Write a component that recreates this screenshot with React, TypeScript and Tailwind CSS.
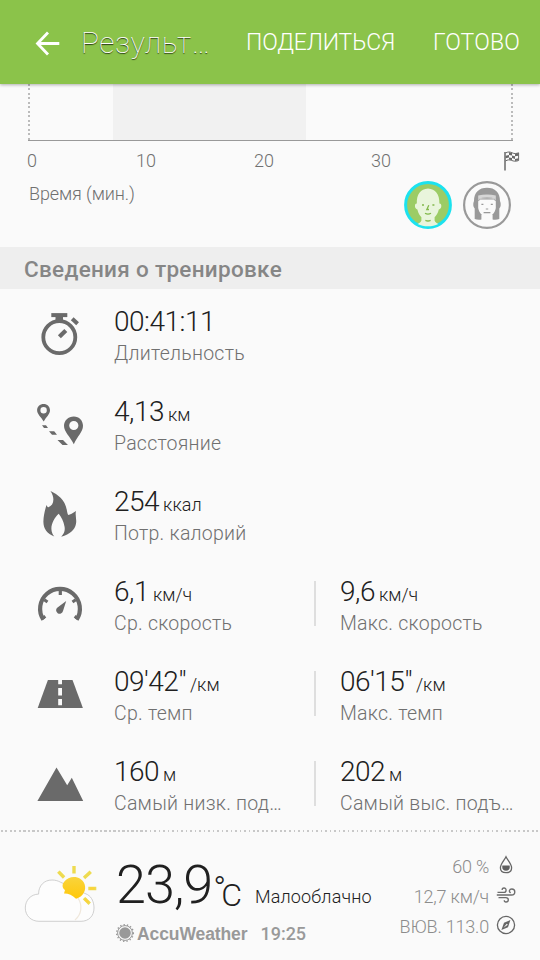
import type { ReactNode } from "react";

interface MetricProps {
    value: string;
    unit?: string;
    label: string;
}

interface RowProps {
    icon: ReactNode;
    first: MetricProps;
    second?: MetricProps;
}

function StopwatchIcon() {
    return (
        <svg width="48" height="48" viewBox="0 0 48 48" fill="none" stroke="#6a6a6a">
            <circle cx="23.3" cy="26.2" r="16" strokeWidth="3.8" />
            <path d="M15.3 4.1H31.3" strokeWidth="4" />
            <path d="M19.5 5H27V10H19.5Z" fill="#6a6a6a" stroke="none" />
            <path d="M36.2 7.8L41.6 12.8" strokeWidth="4" />
            <path d="M23.4 25.8L29.8 19.4" strokeWidth="4.2" />
        </svg>
    );
}

function RouteIcon() {
    return (
        <svg width="48" height="48" viewBox="0 .8 48 48" fill="#6a6a6a">
            <path fillRule="evenodd" d="M7.6 3.7C3.9 3.7 1.1 6.4 1.1 10C1.1 14 5 16.6 7.7 21.3C10.3 16.6 14 14 14 10C14 6.4 11.3 3.7 7.6 3.7ZM7.6 6.8A3.2 3.2 0 1 1 7.6 13.2A3.2 3.2 0 0 1 7.6 6.8Z" />
            <path fillRule="evenodd" d="M37.8 16.2C32.3 16.2 28 20.3 28 25.6C28 31.8 33.7 35.7 37.8 44C41.6 35.7 47 31.8 47 25.6C47 20.3 43.2 16.2 37.8 16.2ZM37.8 20.7A4.6 4.6 0 1 1 37.8 29.9A4.6 4.6 0 0 1 37.8 20.7Z" />
            <path d="M6 25H10L12 27.7H8ZM13 31H18.2L21 34.6H16ZM21.5 39.8H27L32 44.8H26.5Z" />
        </svg>
    );
}

function FlameIcon() {
    return (
        <svg width="48" height="48" viewBox="0 1.3 48 48" fill="#6a6a6a">
            <path d="M14.5 1.4C22 4.8 29.2 10.7 30.8 20.2C31.3 22.8 31.6 24.4 32.3 25.4C34.3 25.1 36.6 23.4 40 21.4C38.9 25.7 40.9 29.3 40 34C38.9 40 34.3 44.5 25.2 47C28.2 43.8 29.3 41.1 28.5 36.7C27.6 31.6 25.5 27.4 22.7 24.1C18.3 28.2 15.2 34.2 15.4 39.3C15.5 42.5 16.7 44.8 18.3 46.8C11 43.9 7.2 39 7.4 31.5C7.6 25.8 8.9 20.5 10.5 15.2C11.4 17.1 12 17.6 12.4 17.6C17.6 15.9 19.4 8.7 14.5 1.4Z" />
        </svg>
    );
}

function GaugeIcon() {
    return (
        <svg width="48" height="48" viewBox="0 0 48 48" fill="none" stroke="#6a6a6a">
            <path d="M7.3 38.6A19.9 19.9 0 1 1 40.7 38.6" strokeWidth="4.2" />
            <path d="M24.3 8.5V14M5.6 38L9.3 35.2M42.4 38L38.7 35.2" strokeWidth="3.2" />
            <path d="M8.3 18.7L11.5 21M39.7 18.7L36.5 21" strokeWidth="3" />
            <path d="M30.2 20L21.5 26.4A3.5 3.5 0 1 0 27 30Z" fill="#6a6a6a" stroke="none" />
        </svg>
    );
}

function RoadIcon() {
    return (
        <svg width="48" height="48" viewBox="0 .9 48 48">
            <path d="M11.9 9.8H36.5L46.9 37.8H1.7Z" fill="#6a6a6a" />
            <path d="M22.2 9.8H26V14.1H22.2ZM22.2 18H26V25.3H22.2ZM22.2 29H26V35.2H22.2Z" fill="#fafafa" />
        </svg>
    );
}

function MountainIcon() {
    return (
        <svg width="48" height="48" viewBox="0 .8 48 48">
            <path d="M1.4 40.8L20.5 7.2L31.2 25L35.8 17.5L47.2 40.8Z" fill="#6a6a6a" />
        </svg>
    );
}

function FlagIcon() {
    return (
        <svg className="mt-0.5" width="16" height="20" viewBox="0 0 16 20" fill="none" stroke="#686868">
            <path d="M1 1V19.5" strokeWidth="1.5" />
            <path d="M1.5 2C4 .6 6 .8 8 1.8C10.5 3 12.5 2.6 14.6 1.8V9.5C12 10.7 9.5 10.2 7.6 9.4C5.5 8.6 3.6 8.6 1.5 10" strokeWidth="1" />
            <path d="M5 1.3L8 2V4.5L5 4ZM11 2.8L14.5 2V4.8L11 5.3ZM1.6 4.8L5 4V6.5L1.6 7.3ZM8 4.5L11 5.3V7.9L8 7ZM5 6.5L8 7V9.3L5 8.6ZM11 7.9L14.5 7.3V9.3L11 10Z" fill="#686868" stroke="none" />
        </svg>
    );
}

function MaleAvatar() {
    return (
        <svg width="48" height="48" viewBox="0 0 48 48">
            <circle cx="24" cy="24" r="22.4" fill="#9ccc65" stroke="#1ce2ee" strokeWidth="3" />
            <path d="M24 7.6C16.5 8 12.6 13.5 12.8 22.5C10 22.4 10.5 28 13.4 28.5C14.2 32 15.6 34.5 17.4 36.2V39.5C17 41.5 14.6 42.2 13.6 43C16.8 44.7 20.3 45.3 24 45.3C27.7 45.3 31.2 44.7 34.4 43C33.4 42.2 31 41.5 30.6 39.5V36.2C32.4 34.5 34 32 34.8 28.5C37.9 28 38.2 22.4 35.4 22.5C35.6 13.5 31.5 8 24 7.6Z" fill="#e9f5dc" />
            <path d="M18 24H20M28.4 24H30.4M24.8 24.2L22.8 28.5H25M21 32.2Q24 34 27 32.2M21.4 39.4Q24 40.6 26.6 39.4" fill="none" stroke="#83b84b" strokeWidth="1.3" />
        </svg>
    );
}

function FemaleAvatar() {
    return (
        <svg width="48" height="48" viewBox="0 0 48 48">
            <circle cx="24" cy="24" r="22.9" fill="#fafafa" stroke="#999" strokeWidth="2.2" />
            <path d="M11.7 38V27.5C10 26 9.8 22.5 11 20C11 11.5 16 6.8 24 6.8C32 6.8 37 11.5 37 20C38.2 22.5 38 26 36.3 27.5V38C34 39 31 39 29.6 38.4V34H18.4V38.4C17 39 14 39 11.7 38Z" fill="#999" />
            <path d="M15.2 17.5H32.8V27C32 32 28.3 35.9 24 35.9C19.7 35.9 16 32 15.2 27Z" fill="#fafafa" />
            <path d="M19 34.8Q24 37.6 29 34.8V38H19Z" fill="#fafafa" />
            <path d="M15.2 14.6Q24 12.4 32.8 14.6V17.6Q24 15.6 15.2 17.6Z" fill="#d6d6d6" />
            <path d="M15.2 18.6Q24 16.4 32.8 18.6V20.2L30.5 18.6H17.5L15.2 20.2Z" fill="#999" />
            <path d="M18.4 23.4H20.4M27.8 23.4H29.8M22.8 28H25.2M20.6 31.6H27.4" stroke="#999" strokeWidth="1.1" />
        </svg>
    );
}

function PartlyCloudyIcon() {
    return (
        <svg width="76" height="60" viewBox="0 0 76 60">
            <defs>
                <linearGradient id="sun" x1="0" y1="0" x2="0" y2="1">
                    <stop offset="0" stopColor="#f9d43c" />
                    <stop offset="1" stopColor="#ffc80b" />
                </linearGradient>
            </defs>
            <path d="M15 55.3C7 55.3 1.3 49.5 1.3 42C1.3 34.2 6.8 28.3 14.6 28.1C14.5 19.4 20.3 14 28 14C31.2 14 34 14.8 36.5 16.2L63.5 28.6C67.8 31 70 36.3 70 42C70 50 64.8 55.3 57 55.3Z" fill="#fdfdfd" stroke="#c4c4c4" strokeWidth=".8" />
            <path d="M54 32C58.5 39 58 48 51 54" fill="none" stroke="#f0e8dc" strokeWidth="1.2" />
            <path d="M40 16C44 11 51 9.4 56.5 13C62 16.7 62.7 24 58.5 28.7C56 31.5 53.8 31.8 52 32.8C48.3 29 44 27.3 40 27.5L41 24C38 22.2 38 18.4 40 16Z" fill="url(#sun)" />
            <path d="M50 1.8V5.8M35.5 6.8L38.9 10.3M65.5 6.9L61.3 10.8M66 22.5H70.6M61.2 33.3L64.5 36.5" fill="none" stroke="#eedb50" strokeWidth="3.4" strokeLinecap="square" />
            <path d="M66 22.5H70.6M61.2 33.3L64.5 36.5" fill="none" stroke="#fbd33a" strokeWidth="2.4" />
        </svg>
    );
}

function AccuSunIcon() {
    return (
        <svg width="20" height="20" viewBox="0 0 20 20">
            <circle cx="9" cy="9" r="5.8" fill="#999" />
            <circle cx="9" cy="9" r="7.4" fill="none" stroke="#999" strokeWidth="1" />
            <circle cx="9" cy="9" r="8.3" fill="none" stroke="#999" strokeWidth="1.5" strokeDasharray="1.3 2.1" />
        </svg>
    );
}

function HumidityIcon() {
    return (
        <svg width="20" height="20" viewBox="0 0 20 20">
            <path d="M10 1.8C8.5 5 4.4 9 4.4 12.7C4.4 15.8 6.8 17.7 10 17.7C13.2 17.7 15.6 15.8 15.6 12.7C15.6 9 11.5 5 10 1.8Z" fill="none" stroke="#666" strokeWidth="1.3" />
            <path d="M6.4 10.4H13.6C14.3 14 12.7 15.8 10 15.8C7.3 15.8 5.7 14 6.4 10.4Z" fill="#5f5f5f" />
        </svg>
    );
}

function WindIcon() {
    return (
        <svg width="20" height="20" viewBox="0 0 20 20" fill="none" stroke="#6c6c6c" strokeWidth="1.35">
            <path d="M1.5 7.4H7.8C10.8 7.4 10.8 3 8 3C6.7 3 6 3.8 6.2 5" />
            <path d="M.8 10H15.5C20 10 19.7 4 15.8 4C13.2 4 12.4 7 14.8 7.6" />
            <path d="M2.5 12.6H9.8C13.2 12.6 13 17 10 17C8.8 17 8.2 16.3 8.3 15.2" />
        </svg>
    );
}

function CompassIcon() {
    return (
        <svg width="20" height="20" viewBox="0 0 20 20">
            <circle cx="10" cy="10" r="8.6" fill="none" stroke="#666" strokeWidth="1.3" />
            <path d="M14.4 5L12 12.2L5.4 15L8 7.8Z" fill="#666" />
            <path d="M10.7 8.7L11.8 9.8L7.5 12.8Z" fill="#fafafa" />
        </svg>
    );
}

function Metric({ value, unit, label }: MetricProps) {
    return (
        <div className="whitespace-nowrap">
            <div className="flex h-8 items-baseline leading-8 text-[#202020]">
                <span className="text-[28px] font-light tracking-[-0.5px]">{value}</span>
                {unit && <span className="ml-1 text-[18px] font-light">{unit}</span>}
            </div>
            <div className="mt-1 text-[19.5px] leading-6 font-light tracking-[0.25px] text-[#707070]">{label}</div>
        </div>
    );
}

const rows: RowProps[] = [
    { icon: <StopwatchIcon />, first: { value: "00:41:11", label: "Длительность" } },
    { icon: <RouteIcon />, first: { value: "4,13", unit: "км", label: "Расстояние" } },
    { icon: <FlameIcon />, first: { value: "254", unit: "ккал", label: "Потр. калорий" } },
    {
        icon: <GaugeIcon />,
        first: { value: "6,1", unit: "км/ч", label: "Ср. скорость" },
        second: { value: "9,6", unit: "км/ч", label: "Макс. скорость" },
    },
    {
        icon: <RoadIcon />,
        first: { value: "09'42\"", unit: "/км", label: "Ср. темп" },
        second: { value: "06'15\"", unit: "/км", label: "Макс. темп" },
    },
    {
        icon: <MountainIcon />,
        first: { value: "160", unit: "м", label: "Самый низк. под…" },
        second: { value: "202", unit: "м", label: "Самый выс. подъ…" },
    },
];

const weather = [
    { text: "60 %", icon: <HumidityIcon /> },
    { text: "12,7 км/ч", icon: <WindIcon /> },
    { text: "ВЮВ. 113.0", icon: <CompassIcon /> },
];

export default function App() {
    return (
        <div className="flex h-[960px] w-[540px] flex-col overflow-hidden bg-[#fafafa] font-[Roboto,sans-serif]">
            <header className="z-10 flex h-[84px] shrink-0 items-center bg-[#8bc34a] pt-0.5 whitespace-nowrap text-white shadow-[0_1px_3px_rgba(0,0,0,0.3)]">
                <svg className="mt-px ml-[35px] shrink-0" width="26" height="26" viewBox="0 0 26 26" fill="none" stroke="#fff" strokeWidth="2.8">
                    <path d="M13 1.5L2.5 12.5L13 23.5M2.5 12.5H24.3" />
                </svg>
                <h1 className="ml-5 w-[165px] text-[30px] leading-9 font-thin tracking-[0.5px] [text-shadow:0_1px_1px_rgba(0,0,0,0.75)]">Результ…</h1>
                <button className="w-[187px] text-left text-[23px] leading-8 tracking-[-0.15px] font-[350]">ПОДЕЛИТЬСЯ</button>
                <button className="text-left text-[23px] leading-8 tracking-[0.2px] font-[350]">ГОТОВО</button>
            </header>

            <section className="h-[163px] shrink-0">
                <div className="mr-[27px] ml-7 flex h-[57px] border-b border-[#999]">
                    <div className="w-0.5 bg-[repeating-linear-gradient(to_bottom,#bbb_0_2px,transparent_2px_4.5px)]" />
                    <div className="mr-auto ml-[83px] w-[193px] bg-[#f1f1f1]" />
                    <div className="w-0.5 bg-[repeating-linear-gradient(to_bottom,#bbb_0_2px,transparent_2px_4.5px)]" />
                </div>
                <div className="mt-2 flex h-6 pl-[27px] text-[18px] leading-6 font-[350] text-[#707070]">
                    <span className="w-[109px]">0</span>
                    <span className="w-[118px]">10</span>
                    <span className="w-[117px]">20</span>
                    <span className="w-[133px]">30</span>
                    <FlagIcon />
                </div>
                <div className="flex justify-between pr-[29px] pl-[29px]">
                    <div className="mt-[9px] text-[18px] leading-6 font-light tracking-[-0.1px] text-[#707070]">Время (мин.)</div>
                    <div className="mt-2 flex gap-[11px]">
                        <MaleAvatar />
                        <FemaleAvatar />
                    </div>
                </div>
            </section>

            <h2 className="h-[42px] shrink-0 bg-[#eee] pl-6 text-[22.5px] leading-[45px] font-medium tracking-[0.3px] text-[#868686]">Сведения о тренировке</h2>

            <main className="shrink-0">
                {rows.map((row) => (
                    <div key={row.first.label} className="flex h-[90px] pt-[17px]">
                        <div className="ml-9 w-[78px] pt-[5px]">{row.icon}</div>
                        <div className="w-[200px]">
                            <Metric {...row.first} />
                        </div>
                        {row.second && (
                            <>
                                <div className="mt-[5px] mr-[24px] h-[45px] w-0.5 bg-[#dedede]" />
                                <Metric {...row.second} />
                            </>
                        )}
                    </div>
                ))}
            </main>

            <footer className="flex flex-1 flex-col">
                <div className="mt-px h-0.5 shrink-0 bg-[repeating-linear-gradient(to_right,transparent_0_1px,#c8c8c8_1px_3px,transparent_3px_4.5px)]" />
                <div className="flex flex-1">
                    <div className="w-[116px] pt-[34px] pl-6">
                        <PartlyCloudyIcon />
                    </div>
                    <div className="w-[268px] pt-[23px] whitespace-nowrap">
                        <div className="flex h-[67px] items-baseline text-[#202020]">
                            <span className="text-[54px] leading-[60px] font-light tracking-[-1px]">23,9</span>
                            <span className="relative -top-[3px] ml-px w-[9px] text-[34px] leading-[34px] font-light tracking-[-4px]">°</span>
                            <span className="relative top-[3px] -ml-px text-[32px] leading-8 font-light">C</span>
                            <span className="ml-[13px] text-[18px] leading-6 font-light tracking-[0.15px]">Малооблачно</span>
                        </div>
                        <div className="flex h-6 items-center text-[#999]">
                            <AccuSunIcon />
                            <span className="ml-px font-['Liberation_Sans',sans-serif] text-[17.5px] leading-6 font-bold tracking-[-0.1px]">AccuWeather</span>
                            <span className="ml-[13px] text-[18px] leading-6 font-medium">19:25</span>
                        </div>
                    </div>
                    <div className="flex w-[132px] flex-col pt-[19px]">
                        {weather.map((item) => (
                            <div key={item.text} className="flex h-[30px] items-center justify-end text-[18px] font-light tracking-[-0.2px] whitespace-nowrap text-[#8c8c8c]">
                                <span className="mr-[7px]">{item.text}</span>
                                <span className="mb-0.5">{item.icon}</span>
                            </div>
                        ))}
                    </div>
                </div>
            </footer>
        </div>
    );
}
